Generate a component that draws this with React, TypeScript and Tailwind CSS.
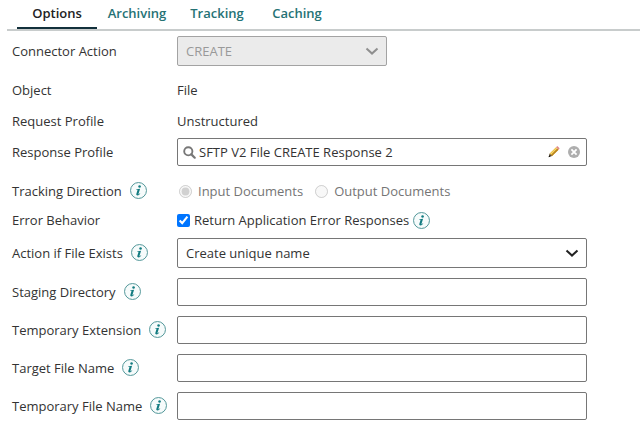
import type { ReactNode } from "react";
import { clsx } from "clsx";

const tabs = ["Options", "Archiving", "Tracking", "Caching"];

const textFields = [
  { id: "staging-directory", label: "Staging Directory" },
  { id: "temporary-extension", label: "Temporary Extension" },
  { id: "target-file-name", label: "Target File Name" },
  { id: "temporary-file-name", label: "Temporary File Name" },
];

function InfoButton({ about, className }: { about: string; className?: string }) {
  return (
    <button type="button" aria-label={`Help: ${about}`} className={clsx("shrink-0", className)}>
      <svg viewBox="0 0 16 16" className="h-[17px] w-[17px]">
        <circle cx="8" cy="8" r="7.5" fill="#f6fbfb" stroke="#4a9294" strokeWidth="0.9" />
        <circle cx="9" cy="4.3" r="1.2" fill="#127b80" />
        <path
          d="M5.9 6.9 9.5 6.3 8 11.1c-.1.5.2.6.6.2l.7-.7.4.3c-.8 1.1-1.5 1.7-2.5 1.7-1.1 0-1.5-.7-1.2-1.6l1-3.3c.1-.3 0-.4-.3-.4h-.9z"
          fill="#127b80"
        />
      </svg>
    </button>
  );
}

function Chevron({ className }: { className: string }) {
  return (
    <svg
      viewBox="0 0 14 10"
      className={clsx("pointer-events-none absolute right-2 top-1/2 h-2.5 w-3.5 -translate-y-1/2", className)}
      fill="none"
      stroke="currentColor"
      strokeWidth="2"
    >
      <path d="M1.5 2.4 7 7.6l5.5-5.2" />
    </svg>
  );
}

function SearchIcon() {
  return (
    <svg viewBox="0 0 13 13" className="h-[13px] w-[13px] shrink-0" fill="none" stroke="#777777">
      <circle cx="5.3" cy="5.3" r="4.1" strokeWidth="1.9" />
      <path d="m8.4 8.4 3.3 3.3" strokeWidth="2.2" strokeLinecap="round" />
    </svg>
  );
}

function PencilIcon() {
  return (
    <svg viewBox="0 0 12 12" className="h-3 w-3">
      <path d="M1.6 7.6 8 1.2l2.5 2.5-6.4 6.4z" fill="#e9b93a" />
      <path d="M2.9 8.9 9.3 2.5l1.2 1.2-6.4 6.4z" fill="#b98522" />
      <path d="M2.3 8 8.6 1.8l.5.5-6.2 6.3z" fill="#f8de7c" />
      <path d="m8 1.2.8-.7c.4-.3.8-.3 1.1 0l1.4 1.4c.3.3.3.7 0 1.1l-.8.7z" fill="#e08a86" />
      <path d="M1.6 7.6.7 11l3.4-.9z" fill="#5c4a30" />
      <path d="M1.2 9.3.6 11.2l1.9-.6z" fill="#111111" />
    </svg>
  );
}

function ClearIcon() {
  return (
    <svg viewBox="0 0 12 12" className="h-3 w-3">
      <circle cx="6" cy="6" r="6" fill="#aeaeae" />
      <path d="m3.4 3.4 5.2 5.2m0-5.2L3.4 8.6" stroke="#ffffff" strokeWidth="1.8" />
    </svg>
  );
}

type RowProps = {
  label: string;
  htmlFor?: string;
  info?: boolean;
  className?: string;
  children: ReactNode;
};

function Row({ label, htmlFor, info, className, children }: RowProps) {
  return (
    <div className={clsx("flex items-center", className)}>
      <div className="flex w-[165px] shrink-0 items-center gap-2">
        {htmlFor ? <label htmlFor={htmlFor}>{label}</label> : <span>{label}</span>}
        {info && <InfoButton about={label} className="mb-0.5" />}
      </div>
      <div className="min-w-0 max-w-[410px] flex-1">{children}</div>
    </div>
  );
}

export default function App() {
  return (
    <main className="min-h-screen bg-white pb-6 font-['Open_Sans',sans-serif] text-[13px] leading-5 text-[#333333]">
      <nav className="ml-[7px] flex border-b-2 border-[#c8cccc] pl-2.5" role="tablist">
        {tabs.map((tab, i) => (
          <button
            key={tab}
            type="button"
            role="tab"
            aria-selected={i === 0}
            className={clsx(
              "w-20 border-b-2 pb-1 pt-[3px] text-center font-semibold",
              i === 0 ? "border-[#12303b] text-[#222222]" : "border-transparent text-[#257275]",
            )}
          >
            {tab}
          </button>
        ))}
      </nav>

      <form className="pl-3 pr-3 pt-[5px]">
        <Row label="Connector Action" htmlFor="connector-action">
          <div className="relative w-[210px]">
            <select
              id="connector-action"
              disabled
              className="block h-[30px] w-full appearance-none rounded-xs border border-[#a3a3a3] bg-[#ebebeb] px-2 text-[#999999] opacity-100"
            >
              <option>CREATE</option>
            </select>
            <Chevron className="text-[#8f8f8f]" />
          </div>
        </Row>

        <Row label="Object" className="mt-3.5">
          File
        </Row>
        <Row label="Request Profile" className="mt-[11px]">
          Unstructured
        </Row>

        <Row label="Response Profile" htmlFor="response-profile" className="mt-[7px]">
          <div className="flex h-7 items-center gap-[3px] rounded-xs border border-[#767676] pl-[5px] pr-1.5">
            <SearchIcon />
            <input
              id="response-profile"
              defaultValue="SFTP V2 File CREATE Response 2"
              className="min-w-0 flex-1 outline-none"
            />
            <div className="flex gap-2">
              <button type="button" aria-label="Edit profile">
                <PencilIcon />
              </button>
              <button type="button" aria-label="Clear profile">
                <ClearIcon />
              </button>
            </div>
          </div>
        </Row>

        <Row label="Tracking Direction" info className="mt-[15px]">
          <div className="flex gap-3 pl-0.5 text-[#757575]">
            <label className="flex items-center gap-1.5">
              <input type="radio" name="tracking-direction" defaultChecked disabled />
              Input Documents
            </label>
            <label className="flex items-center gap-1.5">
              <input type="radio" name="tracking-direction" disabled />
              Output Documents
            </label>
          </div>
        </Row>

        <Row label="Error Behavior" className="mt-[9px]">
          <div className="flex items-center gap-1">
            <label className="flex items-center gap-1">
              <input type="checkbox" defaultChecked />
              Return Application Error Responses
            </label>
            <InfoButton about="Return Application Error Responses" />
          </div>
        </Row>

        <Row label="Action if File Exists" htmlFor="file-exists" info className="mt-2">
          <div className="relative">
            <select
              id="file-exists"
              className="block h-[30px] w-full appearance-none rounded-xs border border-[#767676] bg-white px-2"
            >
              <option>Create unique name</option>
            </select>
            <Chevron className="text-[#222222]" />
          </div>
        </Row>

        {textFields.map((field) => (
          <Row key={field.id} label={field.label} htmlFor={field.id} info className="mt-2.5">
            <input
              id={field.id}
              type="text"
              className="block h-7 w-full rounded-xs border border-[#767676] px-2"
            />
          </Row>
        ))}
      </form>
    </main>
  );
}
